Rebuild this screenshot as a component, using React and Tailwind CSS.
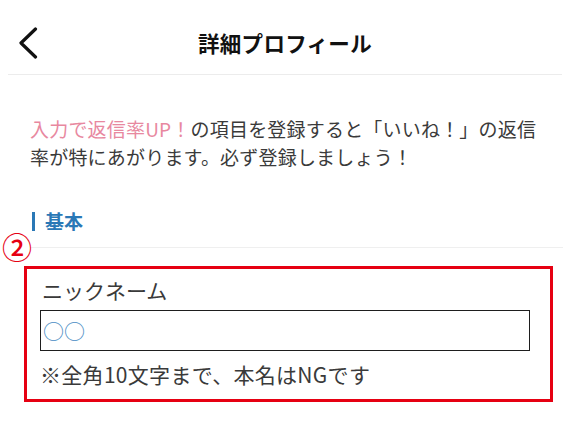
import React from "react";

const jp = { fontFamily: '"Noto Sans CJK JP", "Noto Sans", sans-serif' };

export default function App() {
  return (
    <div className="relative w-[570px] h-[422px] overflow-hidden bg-white text-[#333]" style={jp}>
      {/* header */}
      <div className="mx-[8px] h-[75px] pt-[12px] border-b border-[#ececec] flex items-center">
        <div className="w-[40px] flex items-center">
          <svg width="24" height="32" viewBox="0 0 24 32" className="ml-[9px]">
            <path d="M18.5 2 L4 16 L18.5 30" fill="none" stroke="#111" strokeWidth="3.2" strokeLinecap="round" strokeLinejoin="round" />
          </svg>
        </div>
        <div className="flex-1 text-center text-[21.5px] font-semibold text-[#111] tracking-[0.3px] pr-[40px]">
          詳細プロフィール
        </div>
      </div>

      {/* notice */}
      <p className="mt-[40px] ml-[30px] w-[514px] text-[19px] leading-[28px] tracking-[0.2px] text-[#3a3a3a]">
        <span className="text-[#e8889f]">入力で返信率UP！</span>の項目を登録すると「いいね！」の返信率が特にあがります。必ず登録しましょう！
      </p>

      {/* section title */}
      <div className="mt-[38px] ml-[32px] flex items-center h-[24px] gap-[10px]">
        <div className="w-[3px] h-[19px] bg-[#2a78b6]" />
        <div className="text-[19px] font-bold text-[#2a78b6] leading-[24px]">基本</div>
      </div>
      <div className="mt-[14px] ml-[30px] mr-[7px] border-b border-[#efefef]" />

      {/* annotated field */}
      <div className="mt-[18px] ml-[24px] w-[529px] h-[136px] border-[3px] border-[#e60012] pl-[13px] pt-[7px]">
        <div className="text-[21px] leading-[28px] text-[#3a3a3a] pl-[2px]">ニックネーム</div>
        <div className="mt-[6px] w-[490px] h-[41px] border-[1.5px] border-[#1e1e1e] flex items-center pl-[2px]">
          <span className="text-[21px] text-[#4b8cc4] leading-none">○○</span>
        </div>
        <div className="mt-[9px] text-[21px] leading-[28px] tracking-[0.3px] text-[#3a3a3a]">※全角10文字まで、本名はNGです</div>
      </div>

      {/* annotation number */}
      <div className="absolute left-[2px] top-[231px] text-[30px] leading-none font-medium text-[#e60012]">②</div>
    </div>
  );
}
